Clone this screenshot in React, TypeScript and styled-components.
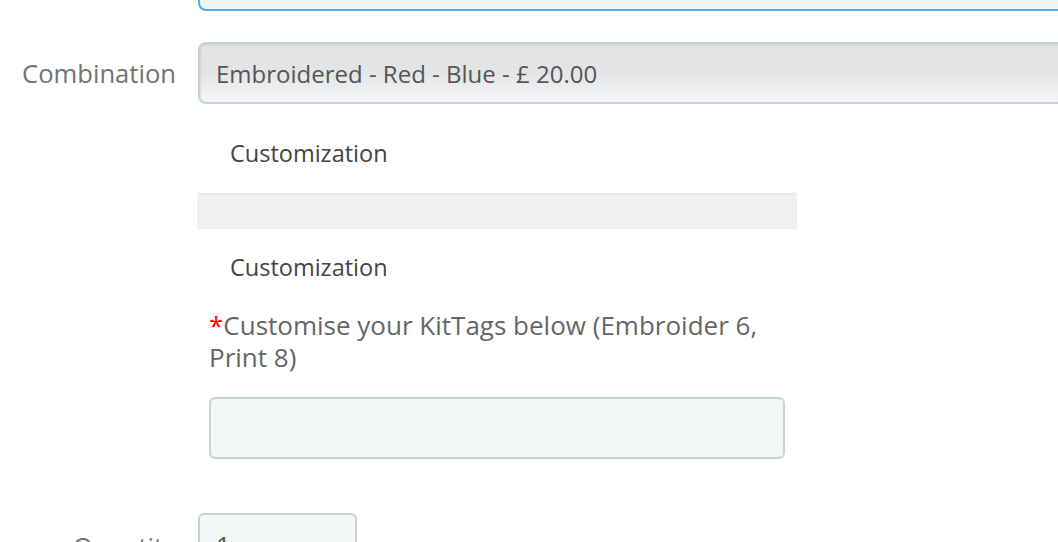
import React from "react";
import styled, { createGlobalStyle } from "styled-components";

const Global = createGlobalStyle`
  html, body { margin: 0; padding: 0; background: #fff; overflow: hidden; }
  body { font-family: "Open Sans", "Noto Sans", sans-serif; }
`;

const Page = styled.div`
  display: flex;
  flex-direction: column;
  width: 1058px;
  height: 542px;
  overflow: hidden;
`;

const Row = styled.div<{ $mt?: number }>`
  display: grid;
  grid-template-columns: 176px 1fr;
  column-gap: 22px;
  align-items: center;
  margin-top: ${(p) => p.$mt ?? 0}px;
`;

const Label = styled.label`
  text-align: right;
  font-size: 25.6px;
  color: #737373;
  white-space: nowrap;
`;

const TopInput = styled.div`
  height: 62px;
  box-sizing: border-box;
  margin-right: -40px;
  border: 2px solid #5ba9e2;
  border-radius: 8px;
  background: #f1f4f5;
`;

const Select = styled.div`
  height: 62px;
  box-sizing: border-box;
  margin-right: -40px;
  border: 2px solid #c6d2d6;
  border-radius: 8px;
  background: linear-gradient(#e1e2e3 0%, #e4e5e6 50%, #f4f5f6 100%);
  box-shadow: inset 1px 1px 2px rgba(0, 0, 0, 0.08);
  display: flex;
  align-items: center;
  padding-left: 16px;
  font-size: 24px;
  color: #555;
`;

const CustomBlock = styled.div`
  grid-column: 2;
  width: 600px;
  margin-left: -1px;
  display: flex;
  flex-direction: column;
`;

const Card = styled.div<{ $top?: boolean }>`
  position: relative;
  z-index: 1;
  background: #fff;
  border-radius: 5px;
  box-shadow: ${(p) =>
    p.$top ? "0 2px 2px -1px rgba(0,0,0,0.08)" : "0 -1px 1px -1px rgba(0,0,0,0.06)"};
  padding: ${(p) => (p.$top ? "14px 12px 23px" : "21px 12px 30px")};
  display: flex;
  flex-direction: column;
`;

const Gap = styled.div`
  height: 36px;
  background: #eff0f1;
`;

const CardTitle = styled.div`
  font-size: 23.5px;
  color: #444;
  padding-left: 21px;
  line-height: 34px;
`;

const FieldLabel = styled.div`
  margin-top: 25px;
  font-size: 26px;
  line-height: 32px;
  color: #666;
  padding-right: 20px;
`;

const Star = styled.span`
  color: #ff0000;
`;

const TextInput = styled.div`
  margin-top: 24px;
  height: 62px;
  box-sizing: border-box;
  border: 2px solid #c8d4d8;
  border-radius: 6px;
  background: #f2f6f7;
`;

const QtyInput = styled.div`
  width: 159px;
  height: 62px;
  box-sizing: border-box;
  border: 2px solid #c6d2d6;
  border-radius: 6px;
  background: #f2f6f7;
  display: flex;
  align-items: center;
  padding: 2px 16px 0;
  font-size: 25.6px;
  color: #555;
`;

const QtyLabel = styled(Label)`
  padding-top: 5px;
`;

export default function App() {
  return (
    <>
      <Global />
      <Page>
        <Row $mt={-51}>
          <span />
          <TopInput />
        </Row>
        <Row $mt={31}>
          <Label>Combination</Label>
          <Select>Embroidered - Red - Blue - £ 20.00</Select>
        </Row>
        <Row $mt={18}>
          <CustomBlock>
            <Card $top>
              <CardTitle>Customization</CardTitle>
            </Card>
            <Gap />
            <Card>
              <CardTitle>Customization</CardTitle>
              <FieldLabel>
                <Star>*</Star>Customise your KitTags below (Embroider 6, Print 8)
              </FieldLabel>
              <TextInput />
            </Card>
          </CustomBlock>
        </Row>
        <Row $mt={24}>
          <QtyLabel>Quantity</QtyLabel>
          <QtyInput>1</QtyInput>
        </Row>
      </Page>
    </>
  );
}
